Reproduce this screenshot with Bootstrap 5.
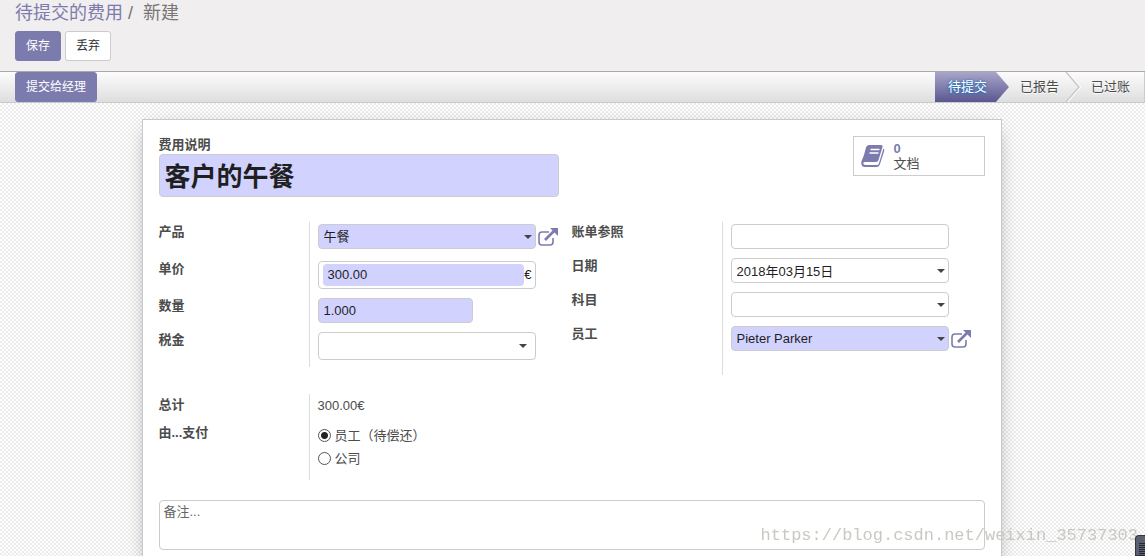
<!DOCTYPE html>
<html lang="zh-CN">
<head>
<meta charset="utf-8">
<meta name="viewport" content="width=device-width, initial-scale=1">
<title>新建 - 待提交的费用</title>
<link href="https://cdn.jsdelivr.net/npm/bootstrap@5.3.0/dist/css/bootstrap.min.css" rel="stylesheet">
<style>
:root{--brand:#7c7bad;--line:#ccc;--required:#d2d2ff}
body{font:13px/20px "Liberation Sans","Noto Sans CJK SC",sans-serif;color:#4c4c4c;height:100vh}
a{color:var(--brand);text-decoration:none}
.control-panel{background:#f0eeee;border-bottom:1px solid #aaa;padding:0 15px 10px}
.crumbs{font-size:18px;line-height:26px;margin-bottom:5px;color:#777}
.crumbs .breadcrumb-item+.breadcrumb-item{padding-left:5px}
.crumbs .breadcrumb-item+.breadcrumb-item::before{padding-right:10px;color:#777}
.btn-tool{font-size:12px;line-height:18px;padding:5px 10px;border-radius:3px;color:#333;background:#fff;border:1px solid var(--line)}
.btn-tool.main-action{color:#fff;background:var(--brand);border-color:var(--brand)}
.status-row{background:linear-gradient(#fcfcfc,#dedede);border-bottom:1px solid #cacaca;padding-left:15px}
.stage{border:0;background:none;height:30px;padding:0 14px 0 10px;color:#4c4c4c;text-shadow:0 1px 1px #fff}
.stage.before-chevron{padding-right:6px}
.stage.current{padding:0 23px 0 13px;color:#fff;background:linear-gradient(#a8a6ca,#5a5790);text-shadow:0 0 2px #1a6fb8,0 1px 3px #1a6fb8;clip-path:polygon(0 0,61px 0,74px 50%,61px 100%,0 100%)}
.stages{border-right:1px solid var(--line)}
.chevron{display:block;width:16px;height:30px}
.form-bg{overflow:hidden;padding:16px 18px 0 16px;background:repeating-conic-gradient(#ebebeb 0 25%,#fff 0 50%) 0 0/4px 4px}
.sheet{max-width:860px;margin:0 auto;padding:16px;background:#fff;border:1px solid #c8c8d3;box-shadow:0 5px 20px -8px rgba(0,0,0,.5)}
.sheet label,.field-name{font-weight:700;line-height:18px}
.sheet .field-row>label{line-height:16px}
.box{height:25px;padding:0 5px;font-size:13px;line-height:18px;color:#1f1f1f;border:1px solid var(--line);border-radius:4px;background-color:#fff}
.box.tall{height:28px}
.required{background-color:var(--required)}
.w-field{width:218px}
.w-short{width:155px}
.with-caret{appearance:none;background-image:url("data:image/svg+xml,%3Csvg xmlns='http://www.w3.org/2000/svg' viewBox='0 0 8 4'%3E%3Cpath d='M0 0h8L4 4z' fill='%23444'/%3E%3C/svg%3E");background-repeat:no-repeat;background-size:8px 4px;background-position:right 3px center}
.with-caret.tall{background-position:right 8px center}
.title-box{width:400px;max-width:100%;height:43px;padding-bottom:3px;font-size:26px;line-height:36px;font-weight:700}
.stat-box{width:132px;height:40px;padding:0 7px;gap:9px;border:1px solid var(--line);background:#fff;line-height:15px;text-align:left;color:#4c4c4c}
.stat-box strong{color:var(--brand)}
.groups{margin-top:25px}
.field-group{background:linear-gradient(#ddd,#ddd) 150px 0/1px 100% no-repeat}
.field-row{display:grid;grid-template-columns:159px 1fr;padding:2px 0 7px}
.field-row.roomy{padding-bottom:10px}
.group-tail{padding-bottom:17px}
.money{padding:2px 3px 2px 4px}
.money input{min-width:0;border:0;border-radius:4px;color:#1f1f1f;padding:0 5px;line-height:18px}
.money span{line-height:22px}
.open-record{border:0;background:none;padding:1px 1px 0 2px;line-height:0}
.totals{margin-top:19px;padding-bottom:4px;max-width:413px}
.totals .field-row{padding:2px 0 6px}
.choice{display:flex;align-items:center;height:23px}
.sheet .choice label{font-weight:400;margin-left:4px}
.choice input{appearance:none;width:13px;height:13px;margin:0;border:1px solid #555;border-radius:50%;background:#fff}
.choice input:checked{background:radial-gradient(circle,#222 0 3px,#fff 4px)}
.notes{height:50px;padding:2px 4px;resize:none;margin-top:20px}
.notes::placeholder{color:#666}
.site-mark{position:fixed;right:7px;bottom:8px;font:17px/24px "Liberation Mono",monospace;color:#c9c9c2;pointer-events:none}
.side-tab{position:fixed;right:0;bottom:0;width:10px;height:21px;border:1px solid #33363f;border-right:0;border-radius:4px 0 0 0;background:#5b6070}
.side-tab svg{display:block}
</style>
</head>
<body class="d-flex flex-column overflow-hidden">
<header class="control-panel">
  <nav aria-label="breadcrumb">
    <ol class="breadcrumb crumbs">
      <li class="breadcrumb-item"><a href="#">待提交的费用</a></li>
      <li class="breadcrumb-item" aria-current="page">新建</li>
    </ol>
  </nav>
  <div class="d-flex gap-1">
    <button type="button" class="btn btn-tool main-action">保存</button>
    <button type="button" class="btn btn-tool">丢弃</button>
  </div>
</header>
<div class="status-row d-flex justify-content-between">
  <button type="button" class="btn btn-tool main-action">提交给经理</button>
  <div class="stages d-flex">
    <button type="button" class="stage current" aria-current="step">待提交</button>
    <button type="button" class="stage before-chevron">已报告</button>
    <svg class="chevron" viewBox="0 0 16 30" fill="none" aria-hidden="true"><path d="M2 0l13 15L2 30" stroke="#fff" stroke-width="2"/><path d="M1 0l13 15L1 30" stroke="#c8c8c8" stroke-width="1.5"/></svg>
    <button type="button" class="stage">已过账</button>
  </div>
</div>
<main class="form-bg flex-grow-1">
  <form class="sheet">
    <div class="d-flex justify-content-between align-items-start">
      <div class="flex-grow-1">
        <label class="d-block" for="desc">费用说明</label>
        <input id="desc" class="box required title-box" type="text" value="客户的午餐">
      </div>
      <button type="button" class="stat-box d-flex align-items-center">
        <svg width="24" height="22" viewBox="0 0 24 22" aria-hidden="true"><path fill="#7c7bad" d="M8 0h12q2 0 1.500 2L17.500 15q-.6 2-2.500 2H4q-1.700 0-1.700 1.300Q2.300 20 4.500 20H16q1.400 0 1.900-1.500L22 5q.1-.8 0-1.500 1.800.8 1.200 2.500L19 19q-.9 3-3.500 3H4Q.7 22 .3 18.500 0 17.500.6 16 3.400 10 5 2.500 5.500 0 8 0z"/><path d="M9.500 4.500h9M8.500 8h9" stroke="#fff" stroke-width="1.500"/></svg>
        <span><strong class="d-block">0</strong>文档</span>
      </button>
    </div>
    <div class="row g-0 groups align-items-start">
      <div class="col-6 field-group">
        <div class="field-row roomy"><label for="product">产品</label>
          <div class="d-flex"><select id="product" class="box required with-caret w-field"><option>午餐</option></select>
            <button type="button" class="open-record" aria-label="打开产品"><svg width="20" height="20" viewBox="0 0 20 20" fill="none" aria-hidden="true"><path d="M11 5H4Q1 5 1 8v7q0 3 3 3h8q3 0 3-3v-4" stroke="#7c7bad" stroke-width="1.600"/><path d="M7 13l9-9" stroke="#7c7bad" stroke-width="2.600"/><path d="M12 1h8v8z" fill="#7c7bad"/></svg></button></div></div>
        <div class="field-row"><label for="price">单价</label>
          <div class="box tall money w-field d-flex"><input id="price" class="required flex-grow-1" type="text" value="300.00"><span>€</span></div></div>
        <div class="field-row"><label for="qty">数量</label><input id="qty" class="box required w-short" type="text" value="1.000"></div>
        <div class="field-row"><label for="tax">税金</label><select id="tax" class="box tall with-caret w-field"><option></option></select></div>
      </div>
      <div class="col-6 field-group group-tail">
        <div class="field-row"><label for="ref">账单参照</label><input id="ref" class="box w-field" type="text"></div>
        <div class="field-row"><label for="date">日期</label><input id="date" class="box with-caret w-field" type="text" value="2018年03月15日"></div>
        <div class="field-row"><label for="account">科目</label><select id="account" class="box with-caret w-field"><option></option></select></div>
        <div class="field-row"><label for="employee">员工</label>
          <div class="d-flex"><select id="employee" class="box required with-caret w-field"><option>Pieter Parker</option></select>
            <button type="button" class="open-record" aria-label="打开员工"><svg width="20" height="20" viewBox="0 0 20 20" fill="none" aria-hidden="true"><path d="M11 5H4Q1 5 1 8v7q0 3 3 3h8q3 0 3-3v-4" stroke="#7c7bad" stroke-width="1.600"/><path d="M7 13l9-9" stroke="#7c7bad" stroke-width="2.600"/><path d="M12 1h8v8z" fill="#7c7bad"/></svg></button></div></div>
      </div>
    </div>
    <div class="field-group totals">
      <div class="field-row"><span class="field-name">总计</span><span>300.00€</span></div>
      <div class="field-row"><span class="field-name" id="paid-by">由...支付</span>
        <div role="radiogroup" aria-labelledby="paid-by">
          <div class="choice"><input type="radio" name="payer" id="payer-employee" checked><label for="payer-employee">员工（待偿还）</label></div>
          <div class="choice"><input type="radio" name="payer" id="payer-company"><label for="payer-company">公司</label></div>
        </div></div>
    </div>
    <textarea class="box notes w-100 d-block" placeholder="备注..." aria-label="备注"></textarea>
  </form>
</main>
<div class="site-mark">https://blog.csdn.net/weixin_35737303</div>
<div class="side-tab"><svg width="9" height="20" viewBox="0 0 9 20" aria-hidden="true"><path d="M3 7.500h6M3 9.500h6M3 11.500h6M3 13.500h6M3 15.500h6M3 17.500h6M3 19.500h6" stroke="#262932"/></svg></div>
<script src="https://cdn.jsdelivr.net/npm/bootstrap@5.3.0/dist/js/bootstrap.bundle.min.js"></script>
</body>
</html>
